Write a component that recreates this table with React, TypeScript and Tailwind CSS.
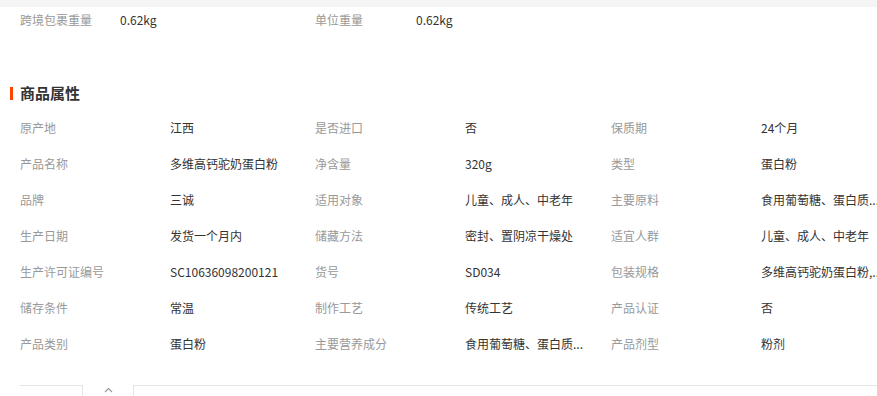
import React from "react";

const rows: [string, string, string, string, string, string][] = [
  ["原产地", "江西", "是否进口", "否", "保质期", "24个月"],
  ["产品名称", "多维高钙驼奶蛋白粉", "净含量", "320g", "类型", "蛋白粉"],
  ["品牌", "三诚", "适用对象", "儿童、成人、中老年", "主要原料", "食用葡萄糖、蛋白质..."],
  ["生产日期", "发货一个月内", "储藏方法", "密封、置阴凉干燥处", "适宜人群", "儿童、成人、中老年"],
  ["生产许可证编号", "SC10636098200121", "货号", "SD034", "包装规格", "多维高钙驼奶蛋白粉,..."],
  ["储存条件", "常温", "制作工艺", "传统工艺", "产品认证", "否"],
  ["产品类别", "蛋白粉", "主要营养成分", "食用葡萄糖、蛋白质...", "产品剂型", "粉剂"],
];

function Cell({ label, value }: { label: string; value: string }) {
  return (
    <div className="flex items-center h-[36px]">
      <div className="w-[150px] shrink-0 text-[#999]">{label}</div>
      <div className="whitespace-nowrap text-[#333]">{value}</div>
    </div>
  );
}

export default function App() {
  return (
    <div
      className="w-full h-[396px] overflow-hidden bg-white text-[12px]"
      style={{ fontFamily: '"Noto Sans CJK SC", "Noto Sans", sans-serif' }}
    >
      <div className="h-[7px] bg-[#f5f5f5]" />
      <div className="flex items-center h-[26px] pl-[20px]">
        <div className="w-[100px] text-[#999]">跨境包裹重量</div>
        <div className="w-[195px] text-[#333]">0.62kg</div>
        <div className="w-[101px] text-[#999]">单位重量</div>
        <div className="text-[#333]">0.62kg</div>
      </div>

      <div className="mt-[50px] flex items-center h-[20px] pl-[10px]">
        <div className="w-[3px] h-[13px] bg-[#ff4400] mr-[7px]" />
        <div className="text-[15px] font-bold text-[#333] leading-[20px]">商品属性</div>
      </div>

      <div className="mt-[7px] pl-[20px] grid grid-cols-[295px_296px_1fr]">
        {rows.map((r, i) => (
          <React.Fragment key={i}>
            <Cell label={r[0]} value={r[1]} />
            <Cell label={r[2]} value={r[3]} />
            <Cell label={r[4]} value={r[5]} />
          </React.Fragment>
        ))}
      </div>

      <div className="mt-[23px] flex pl-[20px]">
        <div className="w-[63px] h-[20px] border-t border-r border-[#e5e5e5]" />
        <div className="w-[50px] flex justify-center pt-[2px]">
          <svg width="9" height="6" viewBox="0 0 9 6">
            <polyline points="1,5 4.5,1.5 8,5" fill="none" stroke="#999" strokeWidth="1.2" />
          </svg>
        </div>
        <div className="flex-1 h-[20px] border-t border-l border-[#e5e5e5]" />
      </div>
    </div>
  );
}
